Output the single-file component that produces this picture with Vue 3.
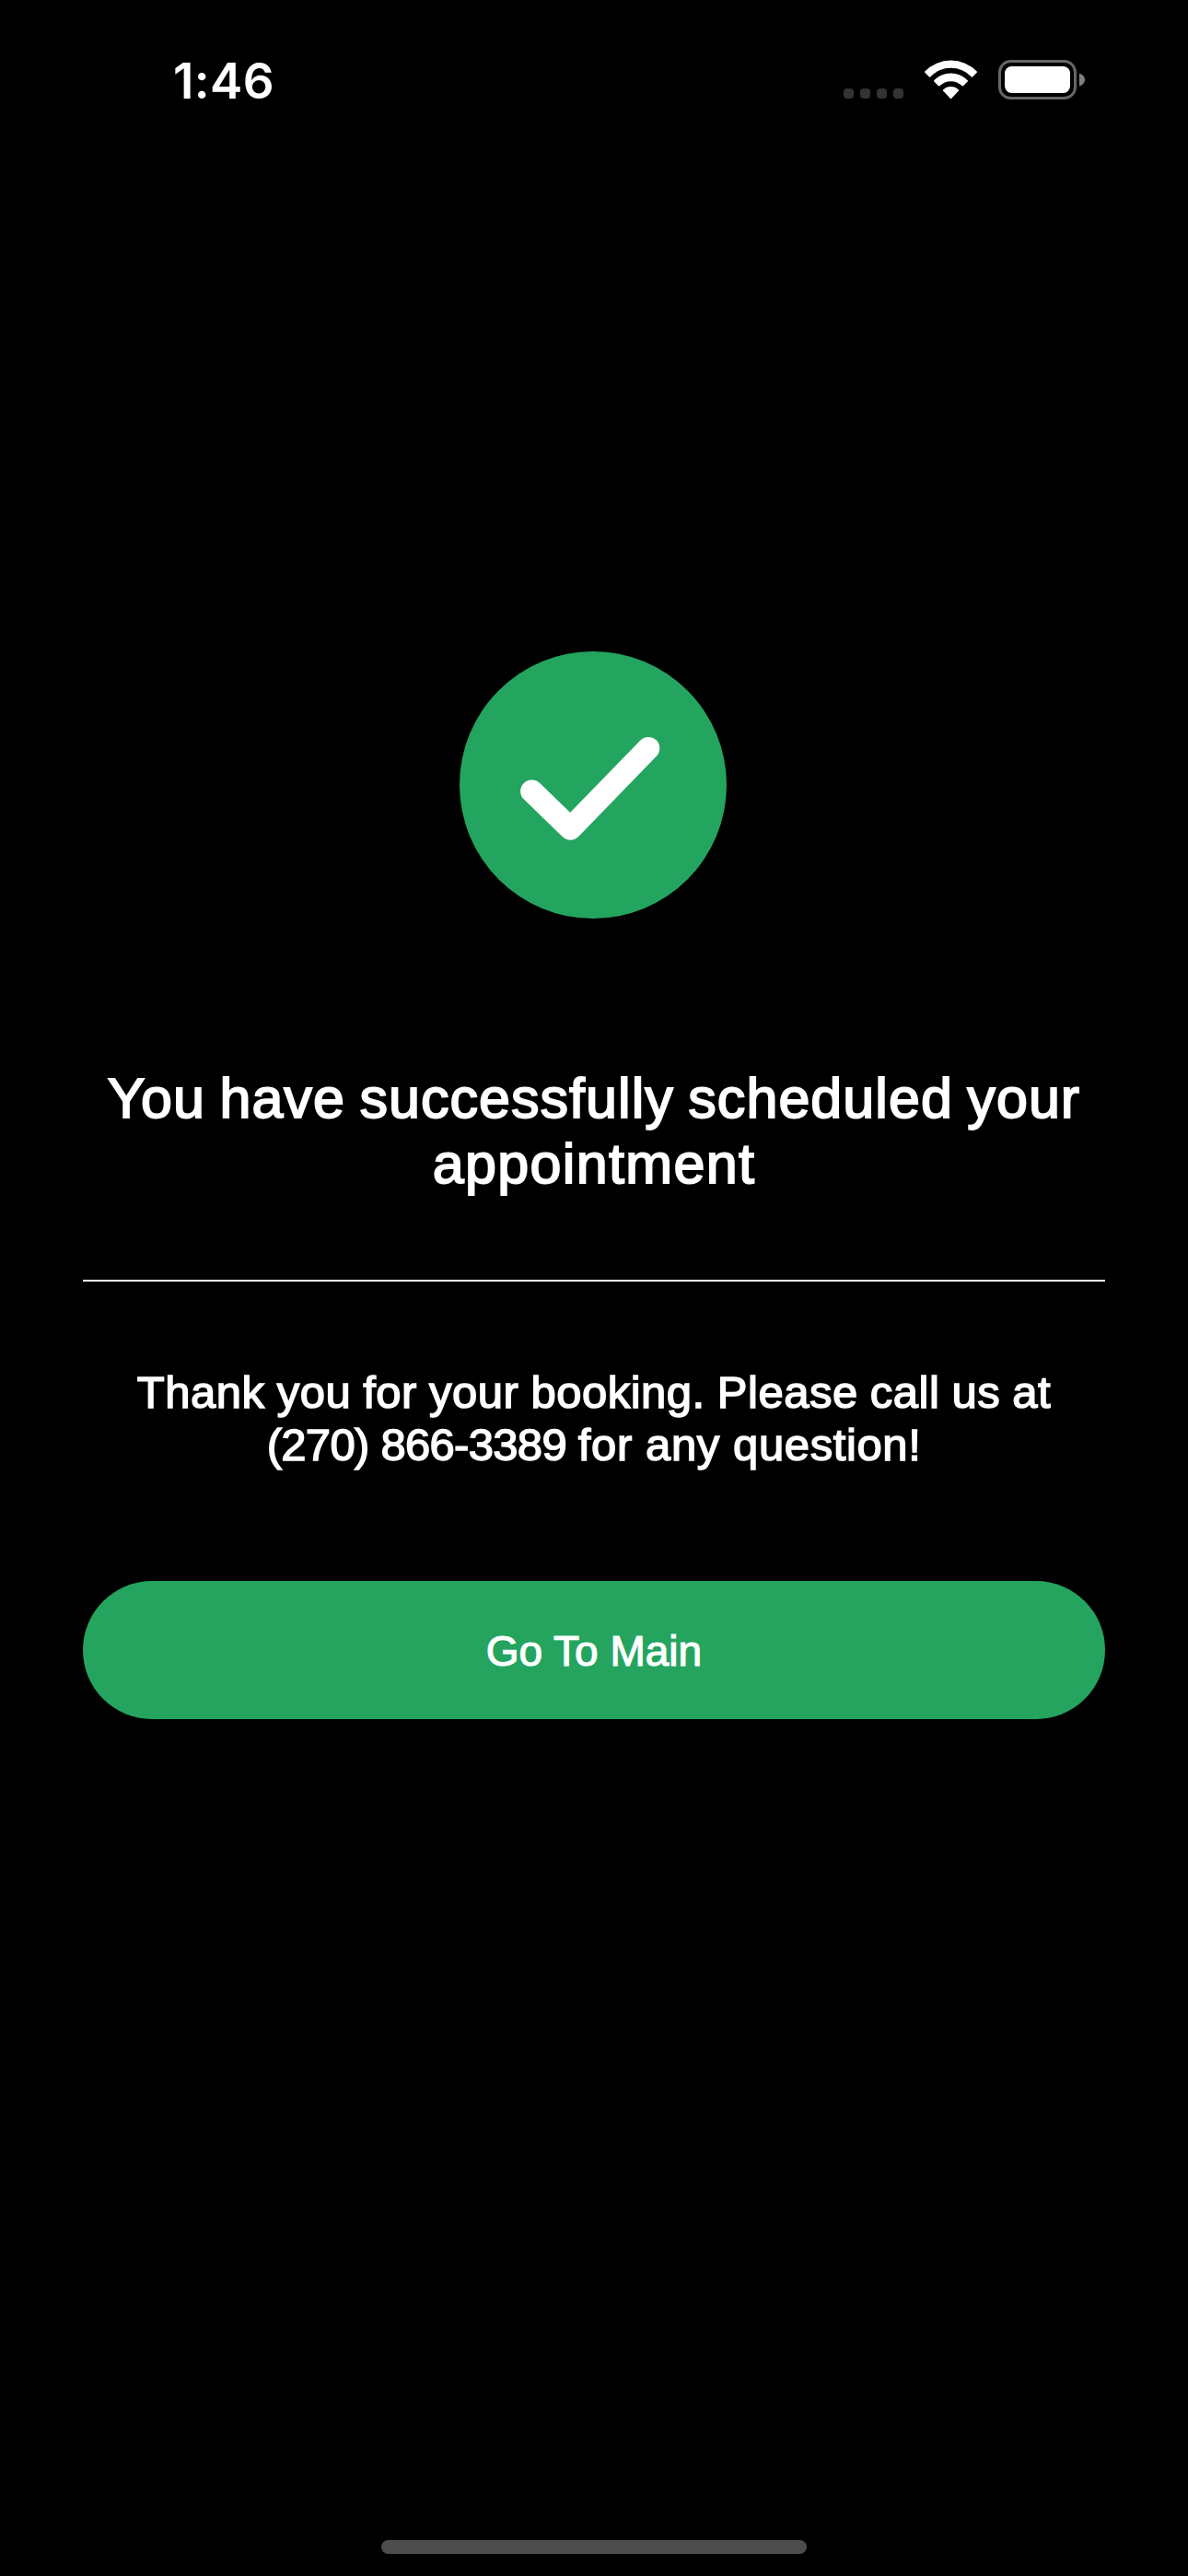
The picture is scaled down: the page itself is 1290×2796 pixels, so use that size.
<script setup>
const digits = '(270) 866-3389 '
const question = 'for any question!'
</script>

<template>
  <div class="screen">
    <header class="status">
      <time class="clock">1:46</time>
      <div class="indicators">
        <div class="dots"><i v-for="n in 4" :key="n"></i></div>
        <svg class="wifi" width="59" height="44" viewBox="0 0 59 44">
          <g fill="#fff">
            <path d="M1.300 13.700Q.7 13.100 1.300 12.500A39.300 39.300 0 0 1 57.700 12.500Q58.300 13.100 57.700 13.700L53 18.400Q52.500 18.900 51.900 18.400A31 31 0 0 0 7.100 18.400Q6.500 18.900 6 18.400Z" />
            <path d="M11.300 23.500Q10.700 22.900 11.300 22.300A25 25 0 0 1 47.700 22.300Q48.300 22.900 47.700 23.500L42.900 28.300Q42.300 28.900 41.700 28.300A17 17 0 0 0 17.300 28.300Q16.700 28.900 16.100 28.300Z" />
            <path d="M21 33.600Q20.500 33 21.100 32.400A12 12 0 0 1 37.900 32.400Q38.500 33 38 33.600L30 41.900Q29.500 42.400 29 41.900Z" />
          </g>
        </svg>
        <svg class="battery" width="95" height="43" viewBox="0 0 95 43">
          <rect x="1.500" y="1.500" width="82" height="40" rx="12" fill="none" stroke="#666" stroke-width="3" />
          <rect x="7" y="7" width="71" height="29" rx="7.500" fill="#fff" />
          <path d="M88 14.700C91.500 15.700 94 18.400 94 21.500S91.500 27.500 88 28.500Z" fill="#808080" />
        </svg>
      </div>
    </header>

    <main class="content">
      <svg class="badge" width="290" height="290" viewBox="0 0 290 290">
        <circle cx="145" cy="145" r="145" fill="#23a55f" />
        <path d="M78.400 151.700L120.400 192.400L205 105.200" fill="none" stroke="#fff" stroke-width="24.600" stroke-linecap="round" stroke-linejoin="round" />
      </svg>
      <h1 class="title">
        <span class="title-a"><span class="cap">Y</span>ou have successfully scheduled your</span>
        <span class="title-b">appointment</span>
      </h1>
      <hr class="rule" />
      <p class="body">
        <span class="body-a">Thank you for your booking. Please call us at</span>
        <span class="body-b"><span class="phone">{{ digits }}</span>{{ question }}</span>
      </p>
      <button class="cta" type="button">Go To Main</button>
    </main>

    <div class="home"></div>
  </div>
</template>

<style>
body {
  margin: 0;
  background: #000;
}
</style>

<style scoped>
.screen {
  box-sizing: border-box;
  width: 1290px;
  height: 2796px;
  background: #000;
  color: #fff;
  display: flex;
  flex-direction: column;
  align-items: center;
  padding-bottom: 24px;
  font-family: "Liberation Sans", Arial, sans-serif;
}
.status {
  box-sizing: border-box;
  width: 100%;
  height: 177px;
  padding: 56px 111px 0 188px;
  display: flex;
  justify-content: space-between;
  align-items: flex-start;
}
.clock {
  font: 600 53px/64px Inter, sans-serif;
  letter-spacing: 0.400px;
  white-space: nowrap;
}
.indicators {
  display: flex;
  margin-top: 9px;
}
.dots {
  display: flex;
  gap: 7px;
  margin: 31px 22px 0 0;
}
.dots i {
  width: 11px;
  height: 11px;
  border-radius: 4px;
  background: #333;
}
.battery {
  margin-left: 22px;
}
.content {
  width: 1110px;
  flex: 1;
  display: flex;
  flex-direction: column;
  align-items: center;
  padding-top: 530px;
}
.badge {
  display: block;
  margin-right: 2px;
}
.title,
.body {
  margin: 0;
  width: 100%;
  display: flex;
  flex-direction: column;
  align-items: center;
  font-weight: 400;
  white-space: pre;
}
.title {
  margin-top: 160px;
  font-size: 61px;
  line-height: 71px;
  -webkit-text-stroke: 1.900px #fff;
}
.title-a {
  letter-spacing: 1.050px;
  word-spacing: -2.500px;
}
.cap {
  letter-spacing: -4.500px;
}
.title-b {
  letter-spacing: 1.350px;
}
.rule {
  width: 100%;
  height: 2px;
  margin: 90px 0 0;
  border: 0;
  background: #fff;
}
.body {
  margin-top: 92px;
  font-size: 49px;
  line-height: 57px;
  -webkit-text-stroke: 1.500px #fff;
}
.body-a {
  letter-spacing: 0.500px;
  word-spacing: -1px;
}
.body-b {
  letter-spacing: 0.600px;
}
.phone {
  letter-spacing: -0.700px;
}
.cta {
  width: 100%;
  height: 150px;
  margin-top: 119px;
  padding: 2px 0 0;
  border: 0;
  border-radius: 75px;
  background: #24a45f;
  color: #fff;
  font: 400 46px/52px "Liberation Sans", Arial, sans-serif;
  -webkit-text-stroke: 1.200px #fff;
}
.home {
  width: 462px;
  height: 15px;
  border-radius: 7.500px;
  background: #4d4d4d;
}
</style>
